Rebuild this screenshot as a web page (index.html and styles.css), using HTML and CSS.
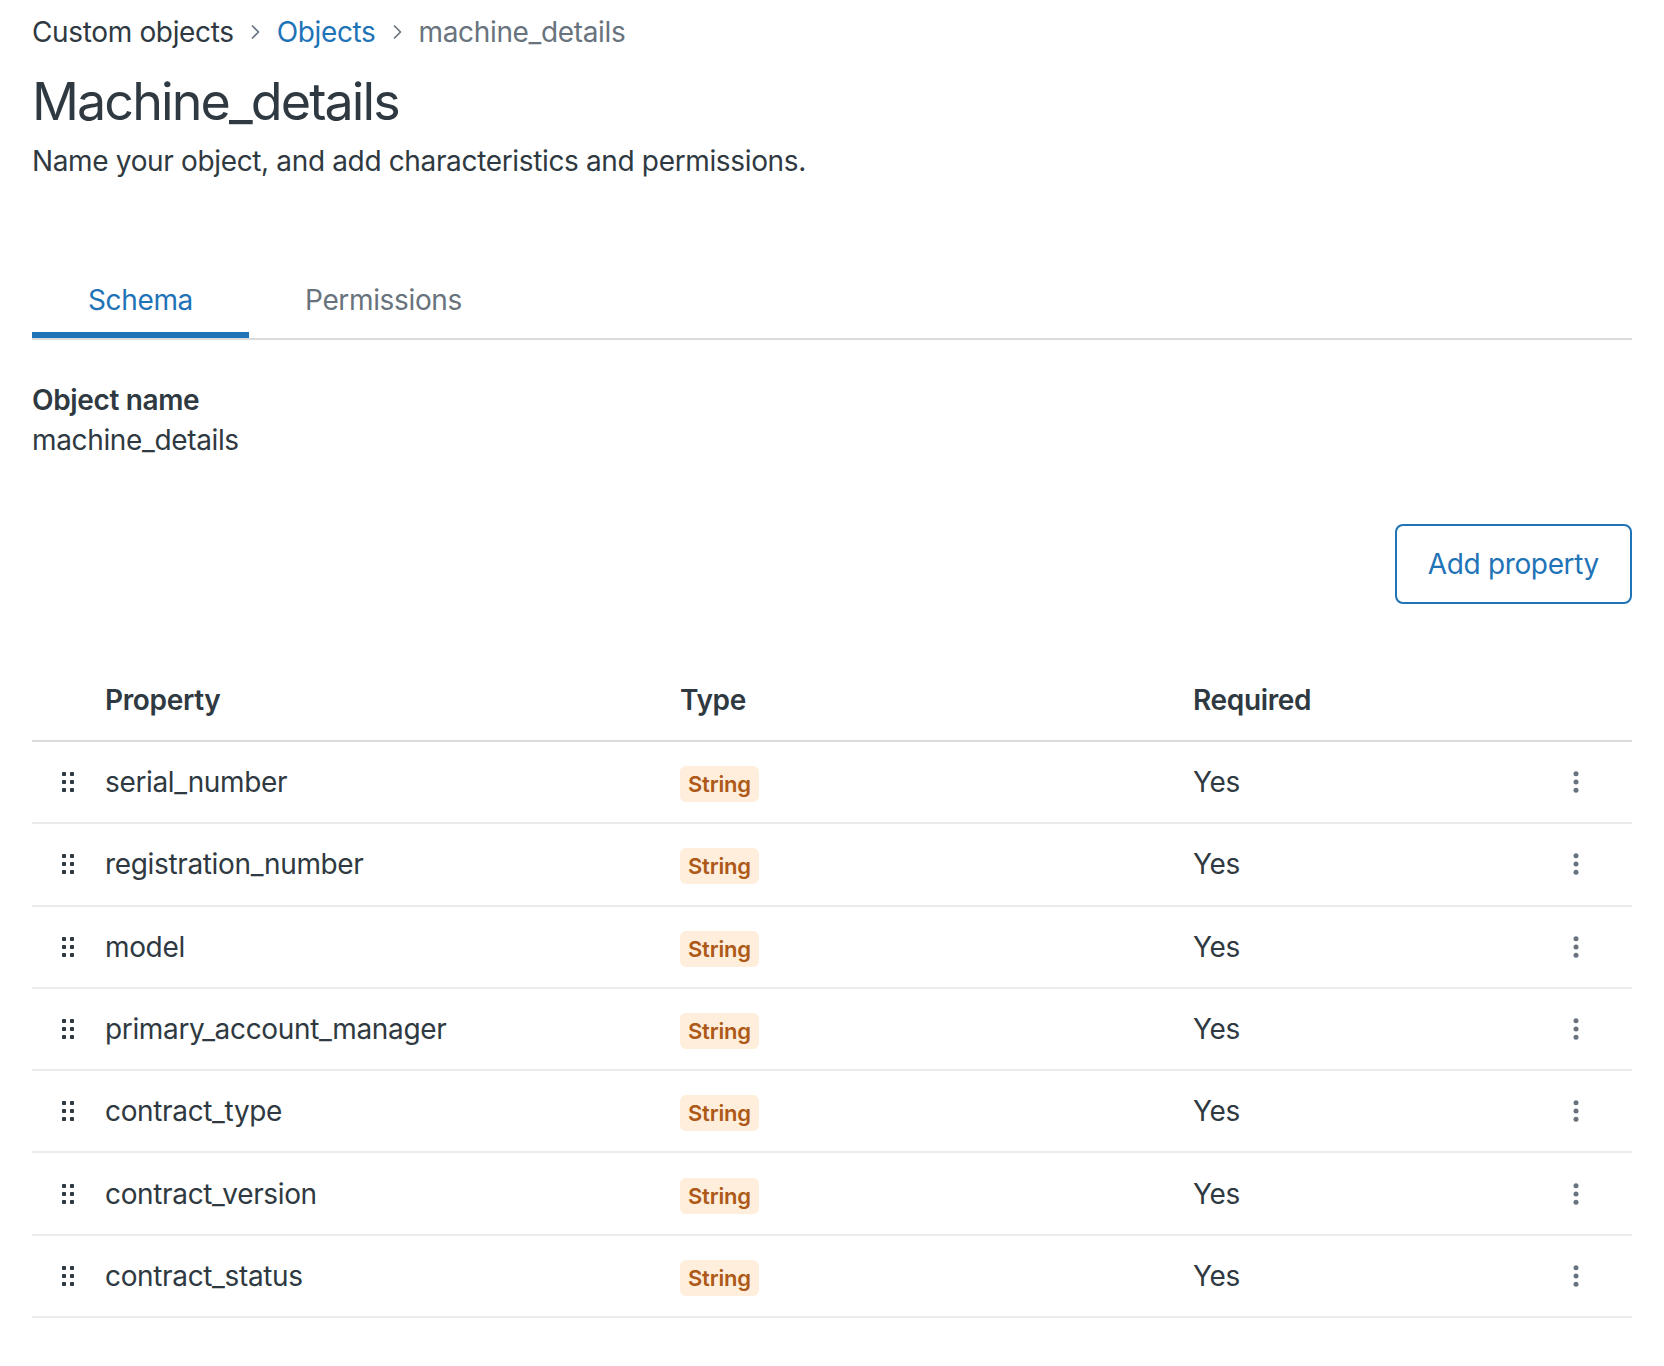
FILE: index.html
```html
<!DOCTYPE html>
<html lang="en">
<head>
<meta charset="utf-8">
<title>Machine_details</title>
<link rel="stylesheet" href="styles.css">
</head>
<body>
<main class="page">
  <nav class="breadcrumb">
    <span class="crumb">Custom objects</span>
    <svg class="chev" width="9" height="14" viewBox="0 0 9 14"><path d="M1.5 1 L7.5 7 L1.5 13" fill="none" stroke="#68737d" stroke-width="1.7" stroke-linecap="round" stroke-linejoin="round"/></svg>
    <a class="crumb crumb--link">Objects</a>
    <svg class="chev" width="9" height="14" viewBox="0 0 9 14"><path d="M1.5 1 L7.5 7 L1.5 13" fill="none" stroke="#68737d" stroke-width="1.7" stroke-linecap="round" stroke-linejoin="round"/></svg>
    <span class="crumb crumb--current">machine_details</span>
  </nav>

  <h1 class="title">Machine_details</h1>
  <p class="subtitle">Name your object, and add characteristics and permissions.</p>

  <div class="tabs">
    <div class="tab tab--active">Schema</div>
    <div class="tab">Permissions</div>
  </div>

  <section class="field">
    <div class="field-label">Object name</div>
    <div class="field-value">machine_details</div>
  </section>

  <div class="actions">
    <button class="btn">Add property</button>
  </div>

  <div class="table">
    <div class="row row--head">
      <div class="cell"></div>
      <div class="cell">Property</div>
      <div class="cell">Type</div>
      <div class="cell">Required</div>
      <div class="cell"></div>
    </div>

    <div class="row">
      <div class="cell cell--grip"><svg width="12" height="20" viewBox="0 0 12 20"><rect x="0" y="0" width="4" height="4" rx="0.8"/><rect x="8" y="0" width="4" height="4" rx="0.8"/><rect x="0" y="8" width="4" height="4" rx="0.8"/><rect x="8" y="8" width="4" height="4" rx="0.8"/><rect x="0" y="16" width="4" height="4" rx="0.8"/><rect x="8" y="16" width="4" height="4" rx="0.8"/></svg></div>
      <div class="cell">serial_number</div>
      <div class="cell"><span class="tag">String</span></div>
      <div class="cell">Yes</div>
      <div class="cell cell--menu"><svg width="6" height="22" viewBox="0 0 6 22"><circle cx="3" cy="2.7" r="2.5"/><circle cx="3" cy="11" r="2.5"/><circle cx="3" cy="19.3" r="2.5"/></svg></div>
    </div>

    <div class="row">
      <div class="cell cell--grip"><svg width="12" height="20" viewBox="0 0 12 20"><rect x="0" y="0" width="4" height="4" rx="0.8"/><rect x="8" y="0" width="4" height="4" rx="0.8"/><rect x="0" y="8" width="4" height="4" rx="0.8"/><rect x="8" y="8" width="4" height="4" rx="0.8"/><rect x="0" y="16" width="4" height="4" rx="0.8"/><rect x="8" y="16" width="4" height="4" rx="0.8"/></svg></div>
      <div class="cell">registration_number</div>
      <div class="cell"><span class="tag">String</span></div>
      <div class="cell">Yes</div>
      <div class="cell cell--menu"><svg width="6" height="22" viewBox="0 0 6 22"><circle cx="3" cy="2.7" r="2.5"/><circle cx="3" cy="11" r="2.5"/><circle cx="3" cy="19.3" r="2.5"/></svg></div>
    </div>

    <div class="row">
      <div class="cell cell--grip"><svg width="12" height="20" viewBox="0 0 12 20"><rect x="0" y="0" width="4" height="4" rx="0.8"/><rect x="8" y="0" width="4" height="4" rx="0.8"/><rect x="0" y="8" width="4" height="4" rx="0.8"/><rect x="8" y="8" width="4" height="4" rx="0.8"/><rect x="0" y="16" width="4" height="4" rx="0.8"/><rect x="8" y="16" width="4" height="4" rx="0.8"/></svg></div>
      <div class="cell">model</div>
      <div class="cell"><span class="tag">String</span></div>
      <div class="cell">Yes</div>
      <div class="cell cell--menu"><svg width="6" height="22" viewBox="0 0 6 22"><circle cx="3" cy="2.7" r="2.5"/><circle cx="3" cy="11" r="2.5"/><circle cx="3" cy="19.3" r="2.5"/></svg></div>
    </div>

    <div class="row">
      <div class="cell cell--grip"><svg width="12" height="20" viewBox="0 0 12 20"><rect x="0" y="0" width="4" height="4" rx="0.8"/><rect x="8" y="0" width="4" height="4" rx="0.8"/><rect x="0" y="8" width="4" height="4" rx="0.8"/><rect x="8" y="8" width="4" height="4" rx="0.8"/><rect x="0" y="16" width="4" height="4" rx="0.8"/><rect x="8" y="16" width="4" height="4" rx="0.8"/></svg></div>
      <div class="cell">primary_account_manager</div>
      <div class="cell"><span class="tag">String</span></div>
      <div class="cell">Yes</div>
      <div class="cell cell--menu"><svg width="6" height="22" viewBox="0 0 6 22"><circle cx="3" cy="2.7" r="2.5"/><circle cx="3" cy="11" r="2.5"/><circle cx="3" cy="19.3" r="2.5"/></svg></div>
    </div>

    <div class="row">
      <div class="cell cell--grip"><svg width="12" height="20" viewBox="0 0 12 20"><rect x="0" y="0" width="4" height="4" rx="0.8"/><rect x="8" y="0" width="4" height="4" rx="0.8"/><rect x="0" y="8" width="4" height="4" rx="0.8"/><rect x="8" y="8" width="4" height="4" rx="0.8"/><rect x="0" y="16" width="4" height="4" rx="0.8"/><rect x="8" y="16" width="4" height="4" rx="0.8"/></svg></div>
      <div class="cell">contract_type</div>
      <div class="cell"><span class="tag">String</span></div>
      <div class="cell">Yes</div>
      <div class="cell cell--menu"><svg width="6" height="22" viewBox="0 0 6 22"><circle cx="3" cy="2.7" r="2.5"/><circle cx="3" cy="11" r="2.5"/><circle cx="3" cy="19.3" r="2.5"/></svg></div>
    </div>

    <div class="row">
      <div class="cell cell--grip"><svg width="12" height="20" viewBox="0 0 12 20"><rect x="0" y="0" width="4" height="4" rx="0.8"/><rect x="8" y="0" width="4" height="4" rx="0.8"/><rect x="0" y="8" width="4" height="4" rx="0.8"/><rect x="8" y="8" width="4" height="4" rx="0.8"/><rect x="0" y="16" width="4" height="4" rx="0.8"/><rect x="8" y="16" width="4" height="4" rx="0.8"/></svg></div>
      <div class="cell">contract_version</div>
      <div class="cell"><span class="tag">String</span></div>
      <div class="cell">Yes</div>
      <div class="cell cell--menu"><svg width="6" height="22" viewBox="0 0 6 22"><circle cx="3" cy="2.7" r="2.5"/><circle cx="3" cy="11" r="2.5"/><circle cx="3" cy="19.3" r="2.5"/></svg></div>
    </div>

    <div class="row">
      <div class="cell cell--grip"><svg width="12" height="20" viewBox="0 0 12 20"><rect x="0" y="0" width="4" height="4" rx="0.8"/><rect x="8" y="0" width="4" height="4" rx="0.8"/><rect x="0" y="8" width="4" height="4" rx="0.8"/><rect x="8" y="8" width="4" height="4" rx="0.8"/><rect x="0" y="16" width="4" height="4" rx="0.8"/><rect x="8" y="16" width="4" height="4" rx="0.8"/></svg></div>
      <div class="cell">contract_status</div>
      <div class="cell"><span class="tag">String</span></div>
      <div class="cell">Yes</div>
      <div class="cell cell--menu"><svg width="6" height="22" viewBox="0 0 6 22"><circle cx="3" cy="2.7" r="2.5"/><circle cx="3" cy="11" r="2.5"/><circle cx="3" cy="19.3" r="2.5"/></svg></div>
    </div>
  </div>
</main>
</body>
</html>
```

FILE: styles.css
```css
* { box-sizing: border-box; }

html, body {
  margin: 0;
  padding: 0;
  background: #ffffff;
}

body {
  font-family: Inter, "Noto Sans", "Liberation Sans", sans-serif;
  color: #2f3941;
  font-size: 28px;
  line-height: 40px;
  letter-spacing: -0.35px;
}

.page {
  padding: 12px 32px 0;
}

/* Breadcrumb */
.breadcrumb {
  display: flex;
  align-items: center;
  height: 40px;
  gap: 17px;
}
.crumb { color: #2f3941; }
.crumb--link { color: #1f73b7; text-decoration: none; }
.crumb--current { color: #68737d; }
.chev { display: block; flex: none; }

/* Heading */
.title {
  margin: 18px 0 0;
  font-size: 52px;
  line-height: 64px;
  font-weight: 400;
  letter-spacing: -1.9px;
  color: #2f3941;
}
.subtitle {
  margin: 7px 0 0;
  font-size: 28px;
  line-height: 40px;
}

/* Tabs */
.tabs {
  display: flex;
  margin-top: 83px;
  border-bottom: 2px solid #d8dcde;
}
.tab {
  padding: 16px 56px 12px;
  border-bottom: 6px solid transparent;
  color: #68737d;
  line-height: 40px;
}
.tab--active {
  color: #1f73b7;
  border-bottom-color: #1f73b7;
}

/* Field */
.field { margin-top: 40px; }
.field-label { font-weight: 600; }

/* Actions */
.actions {
  display: flex;
  justify-content: flex-end;
  margin-top: 64px;
}
.btn {
  font-family: inherit;
  font-size: 28px;
  line-height: 40px;
  letter-spacing: -0.35px;
  color: #1f73b7;
  background: #ffffff;
  border: 2px solid #1f73b7;
  border-radius: 8px;
  padding: 18px 31px;
  cursor: pointer;
}

/* Table */
.table { margin-top: 56px; }
.row {
  display: grid;
  grid-template-columns: 73px 575px 513px 1fr 112px;
  align-items: center;
  height: 82.3px;
  border-bottom: 2px solid #e9ebed;
}
.row--head {
  height: 82px;
  border-bottom-color: #d8dcde;
  font-weight: 600;
}
.cell {
  display: flex;
  align-items: center;
  white-space: nowrap;
}
.cell--grip { padding-left: 30px; }
.cell--grip svg { fill: #2f3941; display: block; }
.cell--menu { justify-content: center; }
.cell--menu svg { fill: #68737d; display: block; }

.tag {
  display: inline-flex;
  align-items: center;
  height: 36px;
  padding: 0 8px;
  margin-top: 4px;
  border-radius: 6px;
  background: #ffeedb;
  color: #ad5918;
  font-size: 22px;
  font-weight: 600;
  letter-spacing: -0.2px;
  line-height: 36px;
}
```
